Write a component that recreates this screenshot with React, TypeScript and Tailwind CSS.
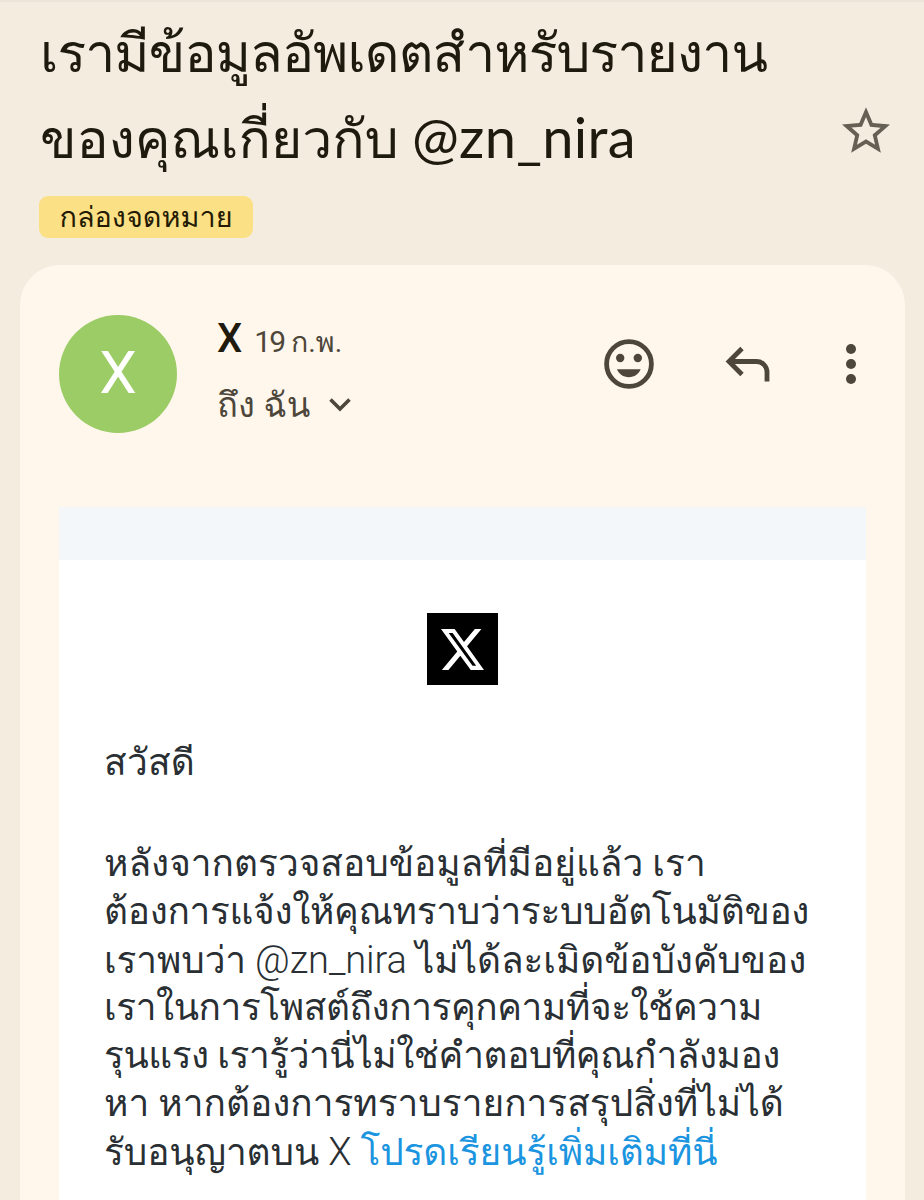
import { Fragment } from 'react';

const bodyLines = [
  { text: 'หลังจากตรวจสอบข้อมูลที่มีอยู่แล้ว เรา', tracking: 'tracking-normal' },
  { text: 'ต้องการแจ้งให้คุณทราบว่าระบบอัตโนมัติของ', tracking: 'tracking-[-0.3px]' },
  { text: 'เราพบว่า @zn_nira ไม่ได้ละเมิดข้อบังคับของ', tracking: 'tracking-[-0.1px]' },
  { text: 'เราในการโพสต์ถึงการคุกคามที่จะใช้ความ', tracking: 'tracking-[-0.42px]' },
  { text: 'รุนแรง เรารู้ว่านี่ไม่ใช่คำตอบที่คุณกำลังมอง', tracking: 'tracking-[-0.46px]' },
  { text: 'หา หากต้องการทราบรายการสรุปสิ่งที่ไม่ได้', tracking: 'tracking-normal' },
];

function StarIcon() {
  return (
    <svg viewBox="2 2 20 19" className="h-[46px] w-[48px]" fill="currentColor">
      <path d="M22 9.24l-7.19-.62L12 2 9.19 8.63 2 9.24l5.46 4.73L5.82 21 12 17.27 18.18 21l-1.63-7.03L22 9.24zM12 15.4l-3.76 2.27 1-4.28-3.32-2.88 4.38-.38L12 6.1l1.71 4.04 4.38.38-3.32 2.88 1 4.28L12 15.4z" />
    </svg>
  );
}

function SmileIcon() {
  return (
    <svg viewBox="0 0 50 50" className="h-[50px] w-[50px]">
      <circle cx="25" cy="25" r="22.4" fill="none" stroke="currentColor" strokeWidth="4.8" />
      <circle cx="16.2" cy="19" r="4.2" fill="currentColor" />
      <circle cx="33.8" cy="19" r="4.2" fill="currentColor" />
      <path d="M13 30.3h23.6C34.8 35 30.4 38.2 24.8 38.2S14.8 35 13 30.3z" fill="currentColor" />
    </svg>
  );
}

function ReplyIcon() {
  return (
    <svg viewBox="0 0 46 36" className="h-9 w-[46px]" fill="none" stroke="currentColor" strokeWidth="4.8">
      <path d="M17 2.5L4 15.5l13 13" />
      <path d="M4 15.5h27.5a10.5 10.5 0 0 1 10.5 10.5V35.5" />
    </svg>
  );
}

function MoreIcon() {
  return (
    <svg viewBox="0 0 10 40" className="h-10 w-[10px]" fill="currentColor">
      <circle cx="5" cy="5" r="5" />
      <circle cx="5" cy="20" r="5" />
      <circle cx="5" cy="35" r="5" />
    </svg>
  );
}

function XLogo() {
  return (
    <div className="flex h-[72px] w-[71px] items-center justify-center bg-black text-white">
      <svg viewBox="1.254 2.25 21.573 19.5" preserveAspectRatio="none" className="h-[41px] w-[43px]" fill="currentColor">
        <path d="M18.244 2.25h3.308l-7.227 8.26 8.502 11.24H16.17l-5.214-6.817L4.99 21.75H1.68l7.73-8.835L1.254 2.25H8.08l4.713 6.231zm-1.161 17.52h1.833L7.084 4.126H5.117z" />
      </svg>
    </div>
  );
}

// Latin handles are set lighter than the Thai around them
function BodyLine({ text, tracking }: { text: string; tracking: string }) {
  return (
    <p className={`h-12 ${tracking}`}>
      {text.split('@zn_nira').map((part, i) => (
        <Fragment key={i}>
          {i > 0 && <span className="text-[38px] font-light">@zn_nira</span>}
          {part}
        </Fragment>
      ))}
    </p>
  );
}

export default function App() {
  return (
    <div className="h-[1200px] w-[924px] overflow-hidden border-t-2 border-[#ece4d8] bg-[#f4ecdf] font-['Roboto','Loma',sans-serif]">
      <header className="flex h-[263px] justify-between pr-[34px] pl-10">
        <div>
          <h1 className="h-[179px] pt-[9px] text-[53.5px] leading-[86px] whitespace-nowrap text-[#1f1a0e]">
            <span className="block h-[86px] tracking-[-0.9px]">เรามีข้อมูลอัพเดตสำหรับรายงาน</span>
            <span className="block h-[86px]">
              ของคุณเกี่ยวกับ{' '}
              <span className="font-['Lato',sans-serif] text-[56px] leading-none tracking-[0.3px]">@zn_nira</span>
            </span>
          </h1>
          <div className="-ml-px mt-[15px] flex h-[42px] w-[214px] items-center justify-center rounded-[9px] bg-[#fce085] text-[28.8px] leading-none whitespace-nowrap text-[#241a04]">
            กล่องจดหมาย
          </div>
        </div>
        <div className="pt-[105px] text-[#665f53]">
          <StarIcon />
        </div>
      </header>

      <main className="mr-[19px] ml-5 h-[940px] rounded-t-[40px] bg-[#fff7ec] px-[39px] pt-[50px]">
        <div className="flex h-[192px]">
          <div className="flex h-[118px] w-[118px] items-center justify-center rounded-full bg-[#9ccc65] pb-[3px] text-[60px] leading-none text-white">
            X
          </div>
          <div className="ml-10 flex-1 whitespace-nowrap text-[#4d463a]">
            <div className="flex h-[46px] items-baseline gap-3 pt-px leading-[46px]">
              <span className="text-[40px] font-medium text-[#1f1a0e]">X</span>
              <span className="text-[28.5px]">
                <span className="text-[30px] tracking-[-2px]">19</span> ก.พ.
              </span>
            </div>
            <div className="mt-[19px] flex items-center gap-[19px] text-[34.5px] leading-[50px]">
              <span>ถึง ฉัน</span>
              <svg viewBox="0 0 22 14" className="h-[14px] w-[22px]" fill="none" stroke="currentColor" strokeWidth="3.6">
                <path d="M1.5 1.5L11 11l9.5-9.5" />
              </svg>
            </div>
          </div>
          <div className="flex h-[98px] items-center text-[#4d463a]">
            <SmileIcon />
            <div className="ml-[71px]">
              <ReplyIcon />
            </div>
            <div className="mr-[10px] ml-[75px]">
              <MoreIcon />
            </div>
          </div>
        </div>

        <section className="h-[700px] bg-white">
          <div className="h-[53px] bg-[#f4f7fa]" />
          <div className="flex justify-center pt-[53px]">
            <XLogo />
          </div>
          <div className="pt-[54px] pl-[45px] text-[37px] leading-[48px] whitespace-nowrap text-[#292f33]">
            <p className="h-12 tracking-[0.3px]">สวัสดี</p>
            <div className="mt-[53px]">
              {bodyLines.map((line) => (
                <BodyLine key={line.text} text={line.text} tracking={line.tracking} />
              ))}
              <p className="h-12 tracking-[-0.1px]">
                รับอนุญาตบน <span className="text-[38px] font-light">X</span>{' '}
                <a className="text-[#1b95e0]">โปรดเรียนรู้เพิ่มเติมที่นี่</a>
              </p>
            </div>
          </div>
        </section>
      </main>
    </div>
  );
}
